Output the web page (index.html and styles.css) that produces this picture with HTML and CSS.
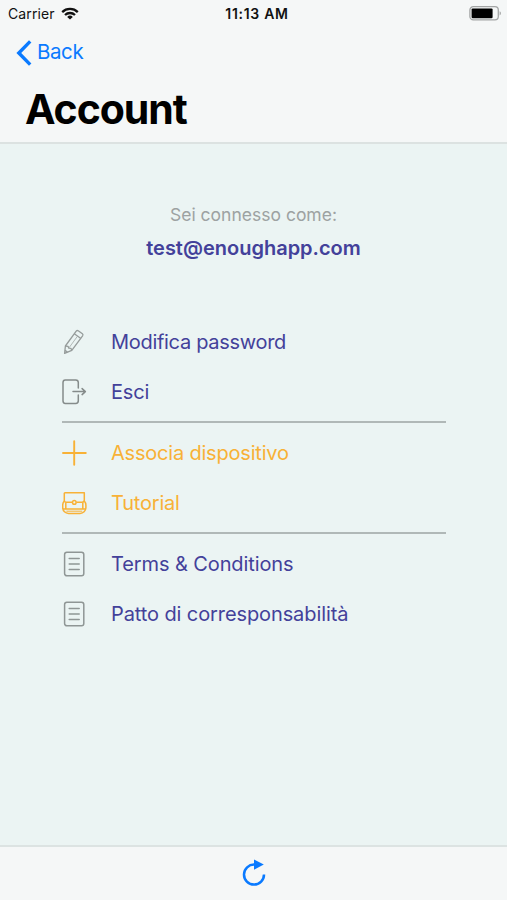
FILE: index.html
```html
<!DOCTYPE html>
<html lang="it">

<head>
    <meta charset="UTF-8">
    <meta name="viewport" content="width=device-width, initial-scale=1.0">
    <title>Account</title>
    <link rel="stylesheet" href="styles.css">
</head>

<body>
    <header class="header">
        <div class="status-bar">
            <div class="carrier">
                <span>Carrier</span>
                <svg class="wifi" viewBox="0 0 18 13" width="18" height="13" fill="none" stroke="#111" stroke-width="2.3">
                    <path d="M1.2 5.1a11.2 11.2 0 0 1 15.6 0" />
                    <path d="M4 8a7.3 7.3 0 0 1 10 0" />
                    <path d="M9 12.6L6.2 9.9a4 4 0 0 1 5.6 0z" fill="#111" stroke="none" />
                </svg>
            </div>
            <div class="time">11:13 AM</div>
            <svg class="battery" viewBox="0 0 33 15" width="33" height="15">
                <rect x="0.9" y="0.7" width="28.4" height="13.2" rx="3.4" fill="none" stroke="#a3a5a5" stroke-width="1.3" />
                <rect x="2.6" y="2.4" width="21" height="9.8" rx="1.2" fill="#000" />
                <path d="M30.6 5.2c1.8.6 1.8 3.6 0 4.2z" fill="#a3a5a5" />
            </svg>
        </div>
        <a class="back" href="#">
            <svg viewBox="0 0 16 26" width="16" height="26" fill="none" stroke="#0a7aff" stroke-width="3.4">
                <path d="M14.2 1.4L2.8 13l11.4 11.6" />
            </svg>
            <span>Back</span>
        </a>
        <h1>Account</h1>
    </header>

    <main class="content">
        <div class="user">
            <p class="user-label">Sei connesso come:</p>
            <p class="user-email">test@enoughapp.com</p>
        </div>

        <nav class="menu">
            <a class="menu-item password" href="#">
                <svg viewBox="0 0 26 26" width="26" height="26" fill="none" stroke="#969c9b" stroke-width="1.3" stroke-linejoin="round">
                    <path d="M2.6 24.4l.8-7.4L14.2 2.2q.9-1.1 2-.4l4.2 3q1 .8.2 2L9.8 21.3z" />
                    <path d="M3.4 17l2.6.3.8 1.9 2.2.2.8 1.9M12.3 4.8l6.6 4.7M3 21.4l2.4 1.7" />
                    <path d="M15.2 7.6L7 18.8" stroke-width="0.7" />
                </svg>
                <span>Modifica password</span>
            </a>
            <a class="menu-item" href="#">
                <svg viewBox="0 0 26 26" width="26" height="26" fill="none" stroke="#858b8a" stroke-width="1.5" stroke-linecap="round" stroke-linejoin="round">
                    <path d="M16.3 9V3.6Q16.3 1 13.7 1H3.3Q1 1 1 3.6v18.2q0 2.6 2.3 2.6h10.4q2.6 0 2.6-2.6V16" />
                    <path d="M11 12.6h12.4M20.1 9.6l3.3 3-3.3 3" />
                </svg>
                <span>Esci</span>
            </a>
            <hr>
            <a class="menu-item orange" href="#">
                <svg viewBox="0 0 26 26" width="26" height="26" fill="none" stroke="#f8b136" stroke-width="1.9" stroke-linecap="round">
                    <path d="M12.2 1.3v23.4M1 13h22.8" />
                </svg>
                <span>Associa dispositivo</span>
            </a>
            <a class="menu-item orange" href="#">
                <svg viewBox="0 0 26 26" width="26" height="26" fill="none" stroke="#f8b136" stroke-width="1.5" stroke-linejoin="round">
                    <path d="M2.3 2.7h20v7.4q0 2.2-2.2 2.2h-5.8M10.3 12.3H4.5q-2.2 0-2.2-2.2V2.7" />
                    <circle cx="12.3" cy="12.4" r="1.8" />
                    <path d="M2.3 11Q.7 12.8.7 15v2.6q0 2.4 1.8 4.2 1.6 1.6 4 1.6h11.6q2.4 0 4-1.6 1.8-1.8 1.8-4.2V15q0-2.2-1.6-4" />
                    <path d="M3.8 12.4v6.4M20.8 12.4v6.4M1 18.9h22.6" />
                    <path d="M4.4 21.2h15.8" stroke-width="1" />
                </svg>
                <span>Tutorial</span>
            </a>
            <hr>
            <a class="menu-item terms" href="#">
                <svg viewBox="0 0 26 26" width="26" height="26" fill="none" stroke="#8f9695" stroke-width="1.5" stroke-linecap="round">
                    <rect x="2.6" y="1.2" width="19.2" height="23.6" rx="2.3" />
                    <path d="M7.2 7.6h10M7.2 13h10M7.2 18.6h10" />
                </svg>
                <span>Terms &amp; Conditions</span>
            </a>
            <a class="menu-item terms" href="#">
                <svg viewBox="0 0 26 26" width="26" height="26" fill="none" stroke="#8f9695" stroke-width="1.5" stroke-linecap="round">
                    <rect x="2.6" y="1.2" width="19.2" height="23.6" rx="2.3" />
                    <path d="M7.2 7.6h10M7.2 13h10M7.2 18.6h10" />
                </svg>
                <span>Patto di corresponsabilità</span>
            </a>
        </nav>
    </main>

    <footer class="toolbar">
        <svg viewBox="0 0 24 28" width="24" height="28">
            <path d="M12.4 5.6A10 10 0 1 0 22 15.4" fill="none" stroke="#0a7aff" stroke-width="2.5" />
            <path d="M12 0.6l9.8 4.9-9.8 5.3z" fill="#0a7aff" />
        </svg>
    </footer>
</body>

</html>
```

FILE: styles.css
```css
* {
    margin: 0;
    padding: 0;
    box-sizing: border-box;
}

body {
    display: flex;
    flex-direction: column;
    height: 100vh;
    overflow: hidden;
    background: #ebf4f3;
    font-family: Inter, sans-serif;
    line-height: 1;
}

a {
    text-decoration: none;
}

svg {
    display: block;
    flex: none;
}

.header {
    height: 144px;
    background: #f5f7f7;
    border-bottom: 2px solid #dce2e1;
}

.status-bar {
    display: grid;
    grid-template-columns: 1fr auto 1fr;
    align-items: center;
    height: 28px;
    padding: 0 5px 1px 8px;
    color: #111;
}

.carrier {
    display: flex;
    align-items: center;
    gap: 6px;
    font-size: 14px;
    letter-spacing: 0.1px;
}

.time {
    padding-left: 4px;
    font-size: 14px;
    font-weight: 600;
    letter-spacing: 0.7px;
}

.battery {
    justify-self: end;
}

.back {
    display: flex;
    align-items: center;
    gap: 5px;
    height: 49px;
    padding-left: 16px;
    color: #0a7aff;
    font-size: 20.5px;
    letter-spacing: -0.4px;
}

h1 {
    padding: 11px 0 0 25px;
    font-size: 41px;
    font-weight: 700;
    line-height: 42px;
    letter-spacing: -1.05px;
}

.content {
    flex: 1;
    padding: 61px 61px 0;
}

.user {
    height: 112px;
    text-align: center;
}

.user-label {
    color: #9da2a2;
    font-size: 17.5px;
    line-height: 20px;
}

.user-email {
    margin-top: 11px;
    color: #43419a;
    font-size: 20px;
    font-weight: 600;
    line-height: 25px;
}

.menu-item {
    display: flex;
    align-items: center;
    gap: 23px;
    height: 50px;
    padding-left: 1px;
    color: #43419a;
    font-size: 20px;
    letter-spacing: -0.2px;
}

.menu-item.password {
    letter-spacing: -0.3px;
}

.menu-item.terms {
    letter-spacing: -0.1px;
}

.menu-item.orange {
    color: #f8b136;
}

hr {
    height: 2px;
    margin: 4px 0 5px 1px;
    border: 0;
    background: #b0b8b7;
}

.toolbar {
    display: flex;
    justify-content: center;
    height: 55px;
    padding-top: 12px;
    background: #f5f7f7;
    border-top: 2px solid #dce3e2;
}
```
